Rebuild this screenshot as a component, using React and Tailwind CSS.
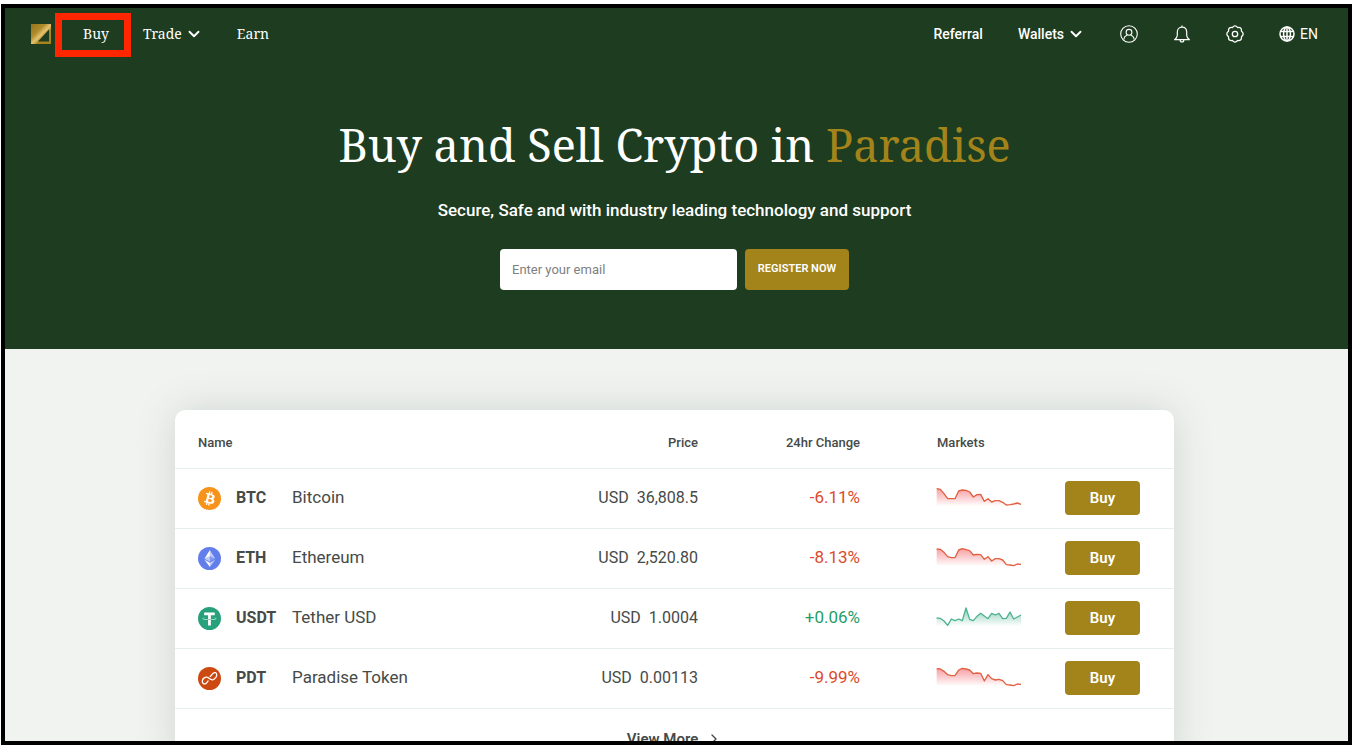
import React, { useState } from "react";
import { ChevronDown, ChevronRight } from "lucide-react";

const BitcoinIcon = () => (
  <svg viewBox="0 0 32 32" className="size-[23px]" aria-hidden="true">
    <circle cx="16" cy="16" r="16" fill="#f7931a" />
    <path
      fill="#fff"
      d="M23.189 14.02c.314-2.096-1.283-3.223-3.465-3.975l.708-2.84-1.728-.43-.69 2.765c-.454-.114-.92-.22-1.385-.326l.695-2.783L15.596 6l-.708 2.839c-.376-.086-.746-.17-1.104-.26l.002-.009-2.384-.595-.46 1.846s1.283.294 1.256.312c.7.175.826.638.805 1.006l-.806 3.235c.048.012.11.03.18.057l-.183-.045-1.13 4.532c-.086.212-.303.531-.793.41.018.025-1.256-.313-1.256-.313l-.858 1.978 2.25.561c.418.105.828.215 1.231.318l-.715 2.872 1.727.43.708-2.84c.472.127.93.245 1.378.357l-.706 2.828 1.728.43.715-2.866c2.948.558 5.164.333 6.097-2.333.752-2.146-.037-3.385-1.588-4.192 1.13-.26 1.98-1.003 2.207-2.538zm-3.95 5.538c-.533 2.147-4.148.986-5.32.695l.95-3.805c1.172.293 4.929.872 4.37 3.11zm.535-5.569c-.487 1.953-3.495.96-4.47.717l.86-3.45c.975.243 4.118.696 3.61 2.733z"
    />
  </svg>
);

const EthereumIcon = () => (
  <svg viewBox="0 0 32 32" className="size-[23px]" aria-hidden="true">
    <circle cx="16" cy="16" r="16" fill="#627eea" />
    <g fill="#fff">
      <path fillOpacity=".6" d="M16.498 4v8.87l7.497 3.35z" />
      <path d="M16.498 4L9 16.22l7.498-3.35z" />
      <path fillOpacity=".6" d="M16.498 21.968v6.027L24 17.616z" />
      <path d="M16.498 27.995v-6.028L9 17.616z" />
      <path fillOpacity=".2" d="M16.498 20.573l7.497-4.353-7.497-3.348z" />
      <path fillOpacity=".6" d="M9 16.22l7.498 4.353v-7.701z" />
    </g>
  </svg>
);

const TetherIcon = () => (
  <svg viewBox="0 0 32 32" className="size-[23px]" aria-hidden="true">
    <circle cx="16" cy="16" r="16" fill="#26a17b" />
    <path
      fill="#fff"
      d="M17.922 17.383v-.002c-.11.008-.677.042-1.942.042-1.01 0-1.721-.03-1.971-.042v.003c-3.888-.171-6.79-.848-6.79-1.658 0-.809 2.902-1.486 6.79-1.66v2.644c.254.018.982.061 1.988.061 1.207 0 1.812-.05 1.925-.06v-2.643c3.88.173 6.775.85 6.775 1.658 0 .81-2.895 1.485-6.775 1.657m0-3.59v-2.366h5.414V7.819H8.595v3.608h5.414v2.365c-4.4.202-7.709 1.074-7.709 2.118 0 1.044 3.309 1.915 7.709 2.118v7.582h3.913v-7.584c4.393-.202 7.694-1.073 7.694-2.116 0-1.043-3.301-1.914-7.694-2.117"
    />
  </svg>
);

const ParadiseIcon = () => (
  <svg viewBox="0 0 32 32" className="size-[23px]" aria-hidden="true">
    <circle cx="16" cy="16" r="16" fill="#cc4a12" />
    <path
      fill="none"
      stroke="#fff"
      strokeWidth="1.8"
      strokeLinecap="round"
      strokeLinejoin="round"
      d="M14 19.500c-1.500 1.200-2 3.500-4 4-2.500.5-4.200-1.500-4-4 .3-3.500 4.200-6.500 7.500-5 2.500 1.200 4 4 7 3.300 3.200-.8 6-4.300 5.500-7.600-.4-2.500-3-3-5-1.500-1.800 1.300-2 3.300-4 4.300"
    />
  </svg>
);

const LogoIcon = () => (
  <svg viewBox="0 0 20 20" className="size-5" aria-hidden="true">
    <defs>
      <linearGradient id="logoGold" x1="0" y1="0" x2="1" y2="1">
        <stop offset="0" stopColor="#94761b" />
        <stop offset=".35" stopColor="#b08c2c" />
        <stop offset=".52" stopColor="#e6c272" />
        <stop offset=".65" stopColor="#a8851f" />
        <stop offset="1" stopColor="#a3841a" />
      </linearGradient>
    </defs>
    <path fill="url(#logoGold)" d="M0 0h20v20H0z" />
    <path fill="#1e3c20" d="M18 5.500V17.500H7z" />
  </svg>
);

const UserIcon = () => (
  <svg viewBox="0 0 18 18" className="size-[18px]" fill="none" stroke="currentColor" strokeWidth="1.1" aria-hidden="true">
    <circle cx="9" cy="9" r="8.300" />
    <circle cx="9" cy="7.300" r="2.900" />
    <path d="M4 14.400v-.9c0-1.600 1.400-2.600 3.200-3.600M14 14.400v-.9c0-1.600-1.400-2.600-3.200-3.600" />
  </svg>
);

const BellIcon = () => (
  <svg viewBox="0 0 18 18" className="size-[18px]" fill="none" stroke="currentColor" strokeWidth="1.200" strokeLinecap="round" strokeLinejoin="round" aria-hidden="true">
    <path d="M9 .8v1.400M9 2.200c-3 0-4.700 2.300-4.700 5v3.300c0 1.500-.9 2.500-2.700 4.200h14.800c-1.800-1.700-2.700-2.700-2.700-4.200V7.200c0-2.700-1.700-5-4.700-5z" />
    <path d="M7.200 15c0 1.300.8 2 1.800 2s1.800-.7 1.800-2" />
  </svg>
);

const GearIcon = () => (
  <svg viewBox="0 0 18 18" className="size-[18px]" fill="none" stroke="currentColor" strokeWidth="1.300" strokeLinejoin="round" aria-hidden="true">
    <path d="M15.470 6.320Q18.900 9 15.470 11.680 16 16 11.680 15.470 9 18.900 6.320 15.470 2 16 2.530 11.680-.9 9 2.530 6.320 2 2 6.320 2.530 9-.9 11.680 2.530 16 2 15.470 6.320z" />
    <circle cx="9" cy="9" r="2.700" />
  </svg>
);

const GlobeIcon = () => (
  <svg viewBox="0 0 16 16" className="size-4" fill="none" stroke="currentColor" strokeWidth="1.500" aria-hidden="true">
    <circle cx="8" cy="8" r="7" />
    <ellipse cx="8" cy="8" rx="3.400" ry="7" />
    <path d="M8 1v14M1.600 5.400h12.800M1.600 10.600h12.800" />
  </svg>
);

const coins = [
  {
    symbol: "BTC",
    name: "Bitcoin",
    price: "36,808.5",
    change: "-6.11%",
    Icon: BitcoinIcon,
    trend: [5, 7, 20, 35, 35, 35, 12, 9, 10, 15, 30, 23, 22, 43, 35, 45, 41, 41, 46, 54, 53, 51, 48, 52],
  },
  {
    symbol: "ETH",
    name: "Ethereum",
    price: "2,520.80",
    change: "-8.13%",
    Icon: EthereumIcon,
    trend: [6, 7, 16, 29, 32, 32, 9, 5, 8, 11, 24, 22, 23, 37, 29, 42, 35, 35, 39, 53, 54, 56, 51, 52],
  },
  {
    symbol: "USDT",
    name: "Tether USD",
    price: "1.0004",
    change: "+0.06%",
    Icon: TetherIcon,
    trend: [33, 34, 42, 55, 36, 41, 36, 41, 3, 37, 41, 28, 19, 27, 35, 19, 24, 19, 35, 34, 15, 36, 30, 24],
  },
  {
    symbol: "PDT",
    name: "Paradise Token",
    price: "0.00113",
    change: "-9.99%",
    Icon: ParadiseIcon,
    trend: [5, 6, 13, 23, 26, 26, 9, 4, 6, 9, 20, 18, 19, 42, 23, 35, 39, 37, 41, 53, 54, 56, 51, 52],
  },
];

const Sparkline = ({ id, values, up }) => {
  const points = values.map((y, i) => `${2 + i * 11},${y}`).join(" ");
  const fill = up ? "#26a17b" : "#f0414b";

  return (
    <svg viewBox="0 0 258 66" className="h-[22px] w-[86px]" aria-hidden="true">
      <defs>
        <linearGradient id={id} gradientUnits="userSpaceOnUse" x1="0" y1="0" x2="0" y2="58">
          <stop offset="0" stopColor={fill} stopOpacity=".55" />
          <stop offset="1" stopColor={fill} stopOpacity="0" />
        </linearGradient>
      </defs>
      <polygon points={`2,58 ${points} 255,58`} fill={`url(#${id})`} />
      <polyline
        points={points}
        fill="none"
        stroke={up ? "#4db38f" : "#e0603f"}
        strokeWidth="4"
        strokeLinejoin="round"
      />
    </svg>
  );
};

const NavBar = () => (
  <nav className="flex h-[52px] items-center justify-between pl-[26px] pr-[30px] text-sm text-white">
    <div className="flex items-center">
      <a href="#home" aria-label="Home">
        <LogoIcon />
      </a>
      <div className="ml-8 flex items-center gap-[34px] font-['Noto_Serif','DejaVu_Serif_Condensed','DejaVu_Serif',serif]">
        <a href="#buy" className="relative">
          Buy
          {/* Highlight around the active item */}
          <span className="absolute -top-[11px] -right-[22px] -bottom-[13px] -left-7 border-[7px] border-[#ff2600]" />
        </a>
        <a href="#trade" className="flex items-center gap-[3px]">
          Trade
          <ChevronDown size={18} strokeWidth={2.5} />
        </a>
        <a href="#earn">Earn</a>
      </div>
    </div>

    <div className="flex items-center gap-[35px] font-medium">
      <a href="#referral">Referral</a>
      <a href="#wallets" className="flex items-center gap-[3px]">
        Wallets
        <ChevronDown size={18} strokeWidth={2.5} />
      </a>
      <button type="button" aria-label="Account">
        <UserIcon />
      </button>
      <button type="button" aria-label="Notifications">
        <BellIcon />
      </button>
      <button type="button" aria-label="Settings">
        <GearIcon />
      </button>
      <button type="button" className="flex items-center gap-[5px] font-normal">
        <GlobeIcon />
        EN
      </button>
    </div>
  </nav>
);

const Hero = () => {
  const [email, setEmail] = useState("");

  return (
    <section className="flex flex-col items-center pt-[51px] pr-1 pb-[59px] text-white">
      <h1 className="font-['Noto_Serif','DejaVu_Serif_Condensed','DejaVu_Serif',serif] text-[45px] leading-[68px]">
        Buy and Sell Crypto in <span className="text-[#a3841a]">Paradise</span>
      </h1>
      <p className="mt-[19px] text-[17px] leading-6 font-medium">
        Secure, Safe and with industry leading technology and support
      </p>
      <form className="mt-[27px] flex gap-2" onSubmit={(e) => e.preventDefault()}>
        <input
          type="email"
          aria-label="Email"
          placeholder="Enter your email"
          className="h-[41px] w-[237px] rounded bg-white px-3 text-[13px] text-gray-800 placeholder:text-[#808080]"
          value={email}
          onChange={(e) => setEmail(e.target.value)}
        />
        <button
          type="submit"
          className="h-[41px] w-[104px] rounded bg-[#a3841a] text-[11px] font-semibold whitespace-nowrap"
        >
          REGISTER NOW
        </button>
      </form>
    </section>
  );
};

const MarketTable = () => (
  <section className="mx-auto w-full max-w-[999px] rounded-[10px] bg-white text-[#464a48] shadow-[0_0_40px_rgba(30,60,32,0.15)]">
    <table className="w-full table-fixed text-left">
      <thead>
        <tr className="h-[58px] border-b border-[#e6eeee] text-[13px]">
          <th className="pt-2 pl-[23px] font-medium">Name</th>
          <th className="w-[161px] pt-2 text-right font-medium">Price</th>
          <th className="w-[162px] pt-2 text-right font-medium">24hr Change</th>
          <th className="w-[205px] pt-2 pl-[77px] font-medium">Markets</th>
          <th className="w-[109px]" aria-label="Action" />
        </tr>
      </thead>
      <tbody>
        {coins.map(({ symbol, name, price, change, Icon, trend }) => {
          const up = change.startsWith("+");
          return (
            <tr key={symbol} className="h-[60px] border-b border-[#e6eeee] text-base">
              <td className="pl-[23px]">
                <div className="flex items-center">
                  <Icon />
                  <span className="ml-[15px] w-14 font-bold">{symbol}</span>
                  <span className="text-[17px]">{name}</span>
                </div>
              </td>
              <td className="text-right">
                <span className="mr-2">USD</span>
                {price}
              </td>
              <td className={up ? "text-right text-[17px] text-[#1f9d6b]" : "text-right text-[17px] text-[#dc4a2c]"}>
                {change}
              </td>
              <td className="pl-[76px]">
                <Sparkline id={`trend-${symbol}`} values={trend} up={up} />
              </td>
              <td>
                <button
                  type="button"
                  className="block h-[34px] w-[75px] rounded bg-[#a3841a] text-[15px] font-semibold text-white"
                >
                  Buy
                </button>
              </td>
            </tr>
          );
        })}
      </tbody>
    </table>
    <a href="#markets" className="flex items-center justify-center gap-2 py-[18px] text-[15px] leading-6 font-semibold">
      View More
      <ChevronRight size={16} />
    </a>
  </section>
);

const App = () => (
  <div className="h-screen bg-white pt-1 pr-0.5 pb-[3px] pl-px font-[Roboto,'Liberation_Sans',sans-serif]">
    <div className="h-full overflow-hidden border-4 border-black bg-[#f1f3f1]">
      <header className="bg-[#1e3c20]">
        <NavBar />
        <Hero />
      </header>
      <main className="pt-[61px] pr-5 pl-4">
        <MarketTable />
      </main>
    </div>
  </div>
);

export default App;
